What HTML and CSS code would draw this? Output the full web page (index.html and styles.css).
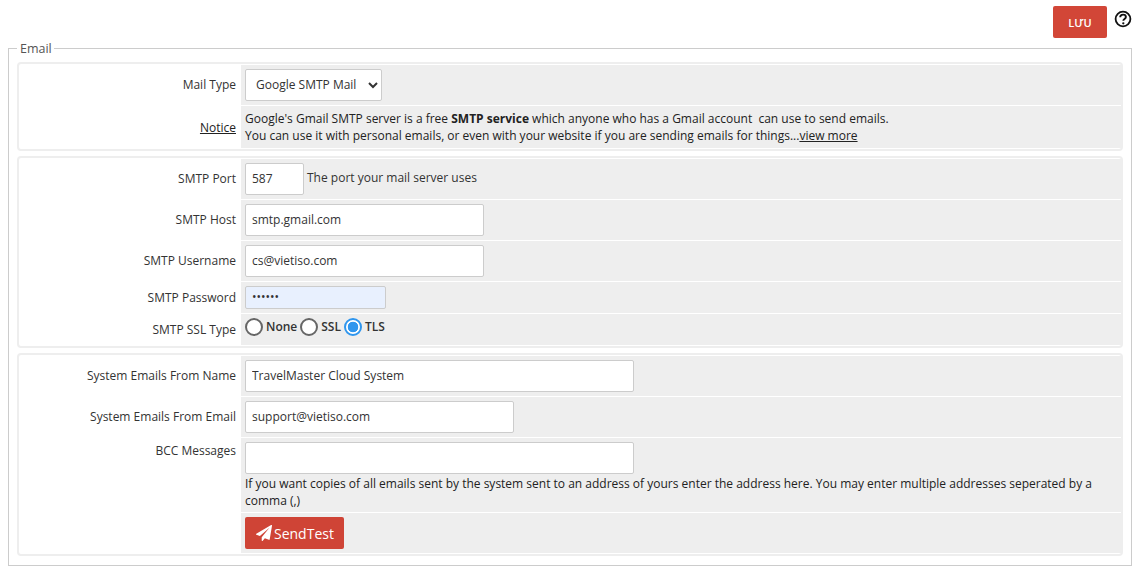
FILE: index.html
```html
<!DOCTYPE html>
<html lang="vi">
<head>
<meta charset="utf-8">
<title>Email</title>
<link rel="stylesheet" href="styles.css">
</head>
<body>
<div class="toolbar">
  <button class="save" type="button">LƯU</button>
  <svg class="help" width="18" height="18" viewBox="0 0 18 18" aria-hidden="true"><circle cx="9" cy="9" r="7.4" fill="none" stroke="#111" stroke-width="1.8"/><path d="M6.2 7.2c0-1.7 1.3-2.6 2.9-2.6 1.6 0 2.8.9 2.8 2.4 0 2-2.6 2-2.6 3.7" fill="none" stroke="#111" stroke-width="1.9"/><circle cx="9.3" cy="13.3" r="1.15" fill="#111"/></svg>
</div>
<fieldset class="box">
  <legend>Email</legend>
  <section class="group">
    <div class="row">
      <div class="label">Mail Type</div>
      <div class="field"><select class="select"><option>Google SMTP Mail</option></select></div>
    </div>
    <div class="row r-notice">
      <div class="label plain"><a href="#">Notice</a></div>
      <div class="field text">Google's Gmail SMTP server is a free <b>SMTP service</b> which anyone who has a Gmail account&nbsp; can use to send emails.<br>You can use it with personal emails, or even with your website if you are sending emails for things...<a href="#">view more</a></div>
    </div>
  </section>
  <section class="group">
    <div class="row">
      <div class="label">SMTP Port</div>
      <div class="field inline"><input class="input w-port" value="587"><span class="hint">The port your mail server uses</span></div>
    </div>
    <div class="row">
      <div class="label">SMTP Host</div>
      <div class="field"><input class="input w-host" value="smtp.gmail.com"></div>
    </div>
    <div class="row">
      <div class="label">SMTP Username</div>
      <div class="field"><input class="input w-host" value="cs@vietiso.com"></div>
    </div>
    <div class="row r-pass">
      <div class="label">SMTP Password</div>
      <div class="field"><input class="input w-pass" type="password" value="123456"></div>
    </div>
    <div class="row r-radio">
      <div class="label plain">SMTP SSL Type</div>
      <div class="field radios">
        <label class="radio"><input type="radio" name="ssl"><span>None</span></label>
        <label class="radio"><input type="radio" name="ssl"><span>SSL</span></label>
        <label class="radio"><input type="radio" name="ssl" checked><span>TLS</span></label>
      </div>
    </div>
  </section>
  <section class="group">
    <div class="row">
      <div class="label">System Emails From Name</div>
      <div class="field"><input class="input w-name" value="TravelMaster Cloud System"></div>
    </div>
    <div class="row">
      <div class="label">System Emails From Email</div>
      <div class="field"><input class="input w-email" value="support@vietiso.com"></div>
    </div>
    <div class="row">
      <div class="label top">BCC Messages</div>
      <div class="field bcc"><input class="input w-name"><p class="text">If you want copies of all emails sent by the system sent to an address of yours enter the address here. You may enter multiple addresses seperated by a comma (,)</p></div>
    </div>
    <div class="row r-send">
      <div class="label"></div>
      <div class="field"><button class="send" type="button"><svg width="16" height="16" viewBox="0 0 1792 1792" aria-hidden="true"><path d="M1764 11q33 24 27 64l-256 1536q-5 29-32 45-14 8-31 8-11 0-24-5l-453-185-242 295q-18 23-49 23-13 0-22-4-19-7-30.5-23.5t-11.5-36.5v-349l864-1059-1069 925-395-162q-37-14-40-55-2-40 32-59l1664-960q15-9 32-9 20 0 36 11z" fill="#fff"/></svg>SendTest</button></div>
    </div>
  </section>
</fieldset>
</body>
</html>
```
FILE: styles.css
```css
* { box-sizing: border-box; }
html, body { height: 100%; }
body {
  margin: 0;
  padding: 0 7px 0 8px;
  background: #fff;
  color: #333;
  font: 12px/17px "Open Sans", sans-serif;
  overflow: hidden;
}
a { color: #222; text-decoration: underline; }
.toolbar {
  height: 41px;
  padding-top: 6px;
  display: flex;
  justify-content: flex-end;
  align-items: flex-start;
  gap: 7px;
}
.save {
  width: 54px;
  height: 32px;
  border: 0;
  border-radius: 2px;
  background: #d24637;
  color: #fff;
  font: 600 11px "Open Sans", sans-serif;
  padding: 0;
}
.help { margin-top: 4px; }
.box {
  margin: 0;
  padding: 6px 8px 9px 8px;
  border: 1px solid #ccc;
  min-width: 0;
}
legend {
  padding: 0 2px 0 3px;
  font-size: 12.5px;
  line-height: 15px;
  color: #555;
}
.group {
  border: 2px solid #eee;
  border-radius: 4px;
  padding: 1px 0;
  margin-bottom: 5px;
}
.group:last-child { margin-bottom: 0; }
.row {
  display: grid;
  grid-template-columns: 222px 1fr;
  min-height: 41px;
}
.label {
  padding: 0 5px 2px 0;
  text-align: right;
  align-self: center;
}
.label.plain { padding-bottom: 0; }
.label.top { align-self: start; padding: 4px 5px 0 0; }
.field {
  background: #eee;
  padding: 4px;
  border-bottom: 1px solid #fff;
}
.row:last-child .field { border-bottom: 0; }
.inline { display: flex; align-items: center; gap: 3px; }
.hint { padding-bottom: 3px; color: #333; }
.input {
  display: block;
  height: 32px;
  border: 1px solid #ccc;
  border-radius: 2px;
  background: #fff;
  color: #333;
  padding: 0 6px 2px;
  font: 12px "Open Sans", sans-serif;
}
.w-port { width: 59px; }
.w-host { width: 239px; }
.w-pass { width: 141px; height: 23px; background: #e8f0fe; }
.w-name { width: 389px; }
.w-email { width: 269px; }
.select {
  display: block;
  width: 137px;
  height: 32px;
  border: 1px solid #ccc;
  border-radius: 2px;
  background: #fff;
  color: #333;
  padding: 0 2px 1px 6px;
  font: 12px "Open Sans", sans-serif;
}
.text { margin: 0; color: #222; }
.bcc { padding-bottom: 3px; }
.bcc .text { margin-top: 1px; }
.r-notice { min-height: 42px; }
.r-pass { min-height: 32px; }
.r-radio { min-height: 31px; }
.r-send { min-height: 40px; }
.radios { display: flex; align-items: flex-start; gap: 3px; padding-top: 3px; }
.radio { display: flex; align-items: center; gap: 3px; font-weight: 600; height: 20px; }
.radio span { padding-bottom: 2px; }
.radio input {
  appearance: none;
  margin: 0;
  width: 18px;
  height: 18px;
  border: 2px solid #666;
  border-radius: 50%;
  background: #fff;
}
.radio input:checked {
  border-color: #2f96ee;
  background: radial-gradient(circle, #2f96ee 0 5px, #fff 5.6px);
}
.send {
  display: flex;
  align-items: center;
  gap: 2px;
  width: 99px;
  height: 32px;
  padding: 0 0 0 11px;
  border: 0;
  border-radius: 2px;
  background: #cf4436;
  color: #fff;
  font: 14px "Open Sans", sans-serif;
}
```
